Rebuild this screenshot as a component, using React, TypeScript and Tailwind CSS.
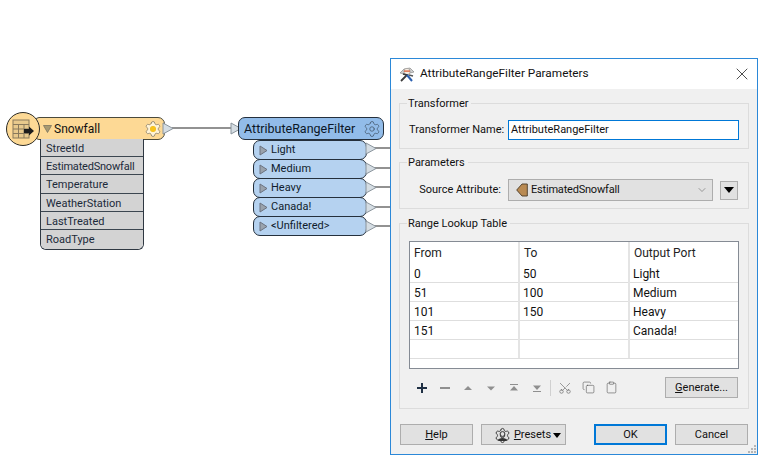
import { Settings, Scissors, Copy, Clipboard, X, ChevronDown } from "lucide-react";

const font = { fontFamily: 'Roboto, "Noto Sans", sans-serif' };

function Tri() {
  return (
    <svg width="9" height="11" viewBox="0 0 9 11" className="shrink-0">
      <path d="M1 1 L8 5.5 L1 10 Z" fill="#9aa3ad" stroke="#6b7280" strokeWidth="1" />
    </svg>
  );
}

function Wires() {
  const ports = [148, 168, 187, 207, 226];
  return (
    <svg width="758" height="455" className="absolute left-0 top-0">
      <line x1="172" y1="128" x2="231" y2="128" stroke="#6e6e6e" strokeWidth="1.5" />
      {ports.map((y) => (
        <line key={y} x1="374" y1={y} x2="391" y2={y} stroke="#6e6e6e" strokeWidth="1.5" />
      ))}
    </svg>
  );
}

function PortTip({ top, left }: { top: number; left: number }) {
  return (
    <svg width="12" height="13" viewBox="0 0 12 13" className="absolute" style={{ top, left }}>
      <path d="M1 1 L11 6.5 L1 12 Z" fill="#d5dde3" stroke="#8a949c" strokeWidth="1" />
    </svg>
  );
}

function Attr({ name, last, tight, tall }: { name: string; last?: boolean; tight?: boolean; tall?: boolean }) {
  return (
    <div
      className={
        "pl-[5px] text-[11px] text-[#1c2a3a] bg-[#d3d3d3] " +
        (tall ? "h-[19px] leading-[20px] " : "h-[18px] leading-[19px] ") +
        (tight ? "tracking-[-0.2px] " : "") +
        (last ? "rounded-b-[5px]" : "border-b border-[#3c4650]")
      }
    >
      {name}
    </div>
  );
}

function Port({ name }: { name: string }) {
  return (
    <div className="relative flex h-[20px] -mt-px items-center gap-[3px] rounded-[7px] border border-[#25303c] bg-[#b5d2f0] pl-[5px] text-[11px] text-[#101c2c]">
      <Tri />
      <span className="pt-px">{name}</span>
    </div>
  );
}

function Btn({ children, className = "", primary }: { children: React.ReactNode; className?: string; primary?: boolean }) {
  return (
    <button
      className={
        "flex h-[21px] items-center justify-center bg-[#e1e1e1] pt-px text-[11px] text-[#111] " +
        (primary ? "border-2 border-[#0078d7] " : "border border-[#adadad] ") +
        className
      }
    >
      {children}
    </button>
  );
}

function Group({ title, className = "", children }: { title: string; className?: string; children: React.ReactNode }) {
  return (
    <fieldset className={"border border-[#dcdcdc] " + className}>
      <legend className="ml-[7px] pl-px pr-[3px] pt-[2px] text-[11px] leading-[14px] text-[#111]">{title}</legend>
      {children}
    </fieldset>
  );
}

function Row({ a, b, c }: { a: string; b: string; c: string }) {
  return (
    <div className="grid h-[19px] grid-cols-[110px_110px_108px] border-b border-[#dedede] text-[12px] leading-[20px] text-[#111]">
      <div className="border-r-2 border-[#e4e4e4] pl-[4px]">{a}</div>
      <div className="border-r-2 border-[#e4e4e4] pl-[3px]">{b}</div>
      <div className="pl-[3px]">{c}</div>
    </div>
  );
}

function Wizard() {
  return (
    <svg width="16" height="16" viewBox="0 0 16 16" className="shrink-0">
      <path d="M1 7 L5 3 L11 2 L15 6 L11 7 L5 8 Z" fill="#cfcfcf" stroke="#7a7a7a" strokeWidth=".6" />
      <circle cx="8" cy="5.5" r="3.2" fill="#f6ebe0" stroke="#8a8a8a" strokeWidth=".6" />
      <rect x="5" y="4.5" width="6" height="1.2" fill="#d8542b" />
      <path d="M2 15 L8 9 L4 8" fill="none" stroke="#3b3b3b" strokeWidth="1.8" />
      <path d="M8 9 L13 15" stroke="#2a5fb0" strokeWidth="2" />
      <path d="M10 9 L14 10" stroke="#555" strokeWidth="1.4" />
    </svg>
  );
}

function Tool({ d, dark }: { d: string; dark?: boolean }) {
  return (
    <svg width="12" height="12" viewBox="0 0 12 12" className="shrink-0">
      <path d={d} fill={dark ? "#1f3044" : "#8f8f8f"} />
    </svg>
  );
}

export default function App() {
  return (
    <div className="relative h-[455px] w-[758px] overflow-hidden bg-white" style={font}>
      <Wires />

      {/* Snowfall node */}
      <div className="absolute left-[35px] top-[117px] flex h-[23px] w-[130px] items-center rounded-r-[7px] rounded-l-[4px] border border-[#4a4a3c] bg-[#fdd995] pl-[7px]">
        <svg width="9" height="8" viewBox="0 0 9 8" className="shrink-0">
          <path d="M.5 .5 L8.5 .5 L4.5 7.5 Z" fill="#a89a72" stroke="#7a7460" strokeWidth=".8" />
        </svg>
        <span className="ml-[2px] pt-px text-[12px] text-[#111]">Snowfall</span>
        <span className="relative ml-auto mr-[2px] flex">
          <Settings size={18} strokeWidth={1} color="#7f7764" fill="#fff3d6" />
          <span className="absolute left-[6px] top-[6px] h-[6px] w-[6px] rounded-full bg-[#f8c31c]" />
        </span>
      </div>
      <PortTip top={122} left={162} />
      <div className="absolute left-[6px] top-[112px] flex h-[34px] w-[34px] items-center justify-center rounded-full border border-[#2c2c28] bg-[#fdd995]">
        <svg width="24" height="24" viewBox="0 0 24 24">
          <rect x="2" y="3" width="16" height="18" fill="#e8c98c" stroke="#8a7a5c" />
          <path d="M2 7.5 H18 M2 12 H18 M2 16.5 H18 M7.5 7.5 V21 M13 7.5 V21" stroke="#8a7a5c" />
          <path d="M13 12 H18 V9.5 L23 14 L18 18.5 V16 H13 Z" fill="#1c1c1c" />
        </svg>
      </div>
      <div className="absolute left-[40px] top-[139px] w-[104px] overflow-hidden rounded-b-[6px] border border-t-0 border-[#2f3842]">
        <Attr name="StreetId" />
        <Attr name="EstimatedSnowfall" tight />
        <Attr name="Temperature" tall />
        <Attr name="WeatherStation" />
        <Attr name="LastTreated" />
        <Attr name="RoadType" last tall />
      </div>

      {/* AttributeRangeFilter node */}
      <PortTip top={122} left={230} />
      <div className="absolute left-[238px] top-[117px] flex h-[23px] w-[146px] items-center rounded-[7px] border border-[#25303c] bg-[#92bce9] pl-[5px]">
        <span className="pt-px text-[12.5px] text-[#0b1626]">AttributeRangeFilter</span>
        <Settings size={18} strokeWidth={1} color="#43566a" className="ml-auto mr-[2px]" />
      </div>
      <div className="absolute left-[253px] top-[141px] w-[114px]">
        <Port name="Light" />
        <Port name="Medium" />
        <Port name="Heavy" />
        <Port name="Canada!" />
        <Port name="<Unfiltered>" />
      </div>
      <PortTip top={142} left={365} />
      <PortTip top={162} left={365} />
      <PortTip top={181} left={365} />
      <PortTip top={201} left={365} />
      <PortTip top={220} left={365} />

      {/* Dialog */}
      <div className="absolute left-[390px] top-[58px] flex h-[397px] w-[368px] flex-col border border-[#2b88d8] bg-[#f0f0f0]">
        <div className="flex h-[30px] shrink-0 items-center bg-white pl-[8px] pr-[5px]">
          <Wizard />
          <span className="ml-[5px] text-[11.8px] text-[#111]">AttributeRangeFilter Parameters</span>
          <X size={20} strokeWidth={0.9} color="#111" className="ml-auto" />
        </div>
        <div className="relative flex flex-1 flex-col px-[8px] pt-[6px]">
          <Group title="Transformer" className="h-[54px]">
            <div className="flex items-center pl-[9px] pt-[9px]">
              <span className="w-[99px] whitespace-nowrap pt-px text-[11px] text-[#111]">Transformer Name:</span>
              <div className="flex h-[20px] w-[231px] items-center border border-[#0078d7] bg-white pl-[2px] pt-px text-[11px] text-[#111]">
                AttributeRangeFilter
              </div>
            </div>
          </Group>
          <Group title="Parameters" className="mt-[5px] h-[55px]">
            <div className="flex items-center pt-[9px]">
              <span className="w-[108px] pr-[7px] text-right text-[11px] text-[#111]">Source Attribute:</span>
              <div className="flex h-[22px] w-[205px] items-center border border-[#adadad] bg-[#e1e1e1] pl-[7px] pr-[4px] text-[11px] tracking-[-0.2px] text-[#111]">
                <svg width="12" height="14" viewBox="0 0 12 14" className="shrink-0">
                  <path d="M.7 7 L6 1 H11.3 V13 H6 Z" fill="#b98a52" stroke="#4a3a26" strokeWidth=".9" />
                </svg>
                <span className="ml-[3px]">EstimatedSnowfall</span>
                <ChevronDown size={12} strokeWidth={1.2} color="#666" className="ml-auto" />
              </div>
              <div className="ml-[7px] flex h-[19px] w-[18px] items-center justify-center border border-[#adadad] bg-[#e1e1e1]">
                <svg width="10" height="6" viewBox="0 0 10 6"><path d="M0 0 H10 L5 6 Z" fill="#000" /></svg>
              </div>
            </div>
          </Group>
          <Group title="Range Lookup Table" className="mt-[6px] h-[194px]">
            <div className="mx-[9px]">
              <div className="mt-[10px] h-[128px] border border-[#858b94] bg-white">
                <div className="grid h-[22px] grid-cols-[110px_110px_108px] text-[12px] leading-[22px] text-[#222]">
                  <div className="border-r-2 border-[#e4e4e4] pl-[4px]">From</div>
                  <div className="border-r-2 border-[#e4e4e4] pl-[4px]">To</div>
                  <div className="pl-[4px]">Output Port</div>
                </div>
                <Row a="0" b="50" c="Light" />
                <Row a="51" b="100" c="Medium" />
                <Row a="101" b="150" c="Heavy" />
                <Row a="151" b="" c="Canada!" />
                <Row a="" b="" c="" />
              </div>
              <div className="mt-[8px] flex h-[21px] items-center">
                <div className="ml-[7px] flex w-[127px] items-center justify-between">
                  <Tool dark d="M5 1 H7 V5 H11 V7 H7 V11 H5 V7 H1 V5 H5 Z" />
                  <Tool d="M1 5 H11 V7 H1 Z" />
                  <Tool d="M2 8 L6 4 L10 8 Z" />
                  <Tool d="M2 4.5 L6 8.5 L10 4.5 Z" />
                  <Tool d="M2 2 H10 V3 H2 Z M2 8.5 L6 4 L10 8.5 Z" />
                  <Tool d="M2 9 H10 V10 H2 Z M2 3.5 L6 8 L10 3.5 Z" />
                </div>
                <div className="ml-[7px] h-[16px] w-px bg-[#d0d0d0]" />
                <Scissors size={14} strokeWidth={1.1} color="#666" className="ml-[7px] -rotate-90" />
                <Copy size={13} strokeWidth={1.1} color="#555" className="ml-[10px]" />
                <Clipboard size={13} strokeWidth={1.1} color="#555" className="ml-[10px]" />
                <Btn className="ml-auto mr-px w-[73px] text-[11.5px]">
                  <span><u>G</u>enerate...</span>
                </Btn>
              </div>
            </div>
          </Group>
          <div className="mt-[15px] flex items-center pl-px">
            <Btn className="w-[73px]"><span><u>H</u>elp</span></Btn>
            <Btn className="ml-[8px] w-[85px] pl-[8px]">
              <span className="relative mr-[3px] flex">
                <Settings size={17} strokeWidth={1.3} color="#333" />
                <svg width="9" height="10" viewBox="0 0 9 10" className="absolute left-[4px] top-[4px]">
                  <circle cx="4.5" cy="3" r="2.4" fill="#e1e1e1" stroke="#333" />
                  <path d="M0 10 C0 6 9 6 9 10 Z" fill="#333" />
                </svg>
              </span>
              <span><u>P</u>resets</span>
              <svg width="8" height="5" viewBox="0 0 8 5" className="ml-[2px]"><path d="M0 0 H8 L4 5 Z" fill="#000" /></svg>
            </Btn>
            <Btn primary className="ml-[28px] w-[73px]">OK</Btn>
            <Btn className="ml-[8px] w-[73px]">Cancel</Btn>
          </div>
          <svg width="10" height="10" viewBox="0 0 10 10" className="absolute bottom-0 right-0">
            <path d="M7 1h2v2H7zM4 4h2v2H4zM7 4h2v2H7zM1 7h2v2H1zM4 7h2v2H4zM7 7h2v2H7z" fill="#b5b5b5" />
          </svg>
        </div>
      </div>
    </div>
  );
}
